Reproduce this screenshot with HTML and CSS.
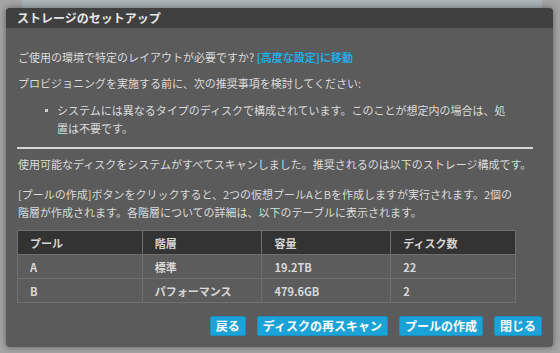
FILE: index.html
```html
<!DOCTYPE html>
<html lang="ja">
<head>
<meta charset="utf-8">
<link rel="stylesheet" href="styles.css">
</head>
<body>
<div class="backdrop">
  <div class="strip"></div>
  <div class="dialog">
    <div class="titlebar">ストレージのセットアップ</div>
    <div class="content">
      <p class="p1">ご使用の環境で特定のレイアウトが必要ですか? <a class="link">[高度な設定]に移動</a></p>
      <p class="p2">プロビジョニングを実施する前に、次の推奨事項を検討してください:</p>
      <ul class="list">
        <li>システムには異なるタイプのディスクで構成されています。このことが想定内の場合は、処<br>置は不要です。</li>
      </ul>
      <div class="rule"></div>
      <p class="p3">使用可能なディスクをシステムがすべてスキャンしました。推奨されるのは以下のストレージ構成です。</p>
      <p class="p4">[プールの作成]ボタンをクリックすると、2つの仮想プールAとBを作成しますが実行されます。2個の<br>階層が作成されます。各階層についての詳細は、以下のテーブルに表示されます。</p>
      <table class="pools">
        <thead>
          <tr><th class="c1">プール</th><th class="c2">階層</th><th class="c3">容量</th><th class="c4">ディスク数</th></tr>
        </thead>
        <tbody>
          <tr><td>A</td><td>標準</td><td>19.2TB</td><td>22</td></tr>
          <tr><td>B</td><td>パフォーマンス</td><td>479.6GB</td><td>2</td></tr>
        </tbody>
      </table>
      <div class="actions">
        <button class="btn">戻る</button>
        <button class="btn">ディスクの再スキャン</button>
        <button class="btn">プールの作成</button>
        <button class="btn">閉じる</button>
      </div>
    </div>
  </div>
</div>
</body>
</html>
```
FILE: styles.css
```css
* { box-sizing: border-box; }
html, body {
  margin: 0;
  padding: 0;
  width: 560px;
  height: 353px;
  overflow: hidden;
  background: #a4a4a4;
  font-family: "Noto Sans CJK JP", "Noto Sans", sans-serif;
}
.backdrop {
  position: relative;
  width: 560px;
  height: 353px;
  padding: 8px 0 0 6px;
}
.strip {
  position: absolute;
  left: 22px;
  top: 0;
  width: 520px;
  height: 10px;
  background: #aab3b7;
}
.dialog {
  position: relative;
  width: 547px;
  height: 339px;
  background: #5b5b5b;
  border-radius: 4px;
  overflow: hidden;
  box-shadow: 0 0 6px rgba(0,0,0,0.45);
}
.titlebar {
  height: 20px;
  background: #404040;
  color: #e6e6e6;
  font-size: 12px;
  font-weight: bold;
  line-height: 20px;
  padding-left: 11px;
}
.content {
  padding: 20px 0 0 12px;
  color: #dadada;
  font-size: 11px;
  line-height: 18px;
}
p { margin: 0; white-space: nowrap; }
.link { color: #1eaee6; font-weight: bold; }
.p2 { margin-top: 8px; }
.list {
  margin: 9px 0 0 0;
  padding-left: 39px;
  white-space: nowrap;
}
.list li { list-style: none; position: relative; }
.list li::before {
  content: "";
  position: absolute;
  left: -12px;
  top: 8px;
  width: 3px;
  height: 3px;
  background: #cfcfcf;
}
.rule {
  margin: 10px 0 0 -1px;
  width: 516px;
  height: 2px;
  background: #d6d6d6;
}
.p3 { margin-top: 6px; }
.p4 { margin-top: 12px; }
.pools {
  margin: 9px 0 0 -1px;
  border-collapse: collapse;
  width: 499px;
  font-size: 11px;
  font-weight: bold;
  color: #d8d8d8;
}
.pools th, .pools td {
  text-align: left;
  height: 24px;
  padding: 0 12px;
  border: 1px solid #6f6f6f;
  line-height: 22px;
}
.pools th { background: #333333; color: #d4d4d4; }
.pools td { background: #5c5c5c; }
.c1 { width: 125px; }
.c2 { width: 120px; }
.c3 { width: 129px; }
.c4 { width: 125px; }
.actions {
  display: flex;
  justify-content: flex-end;
  gap: 11px;
  margin-top: 13px;
  padding-right: 11px;
}
.btn {
  height: 20px;
  padding: 0 5px;
  border: 1px solid #1a8fc0;
  border-radius: 2px;
  background: #1ba3d8;
  color: #ffffff;
  font-family: "Noto Sans CJK JP", sans-serif;
  font-size: 12px;
  font-weight: bold;
  line-height: 18px;
}
```
